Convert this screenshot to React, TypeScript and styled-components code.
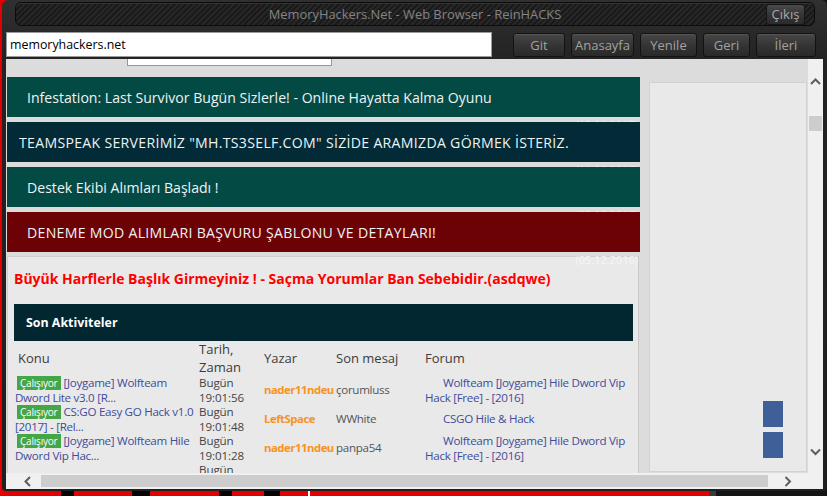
import React from 'react'
import styled, { createGlobalStyle } from 'styled-components'

const GlobalStyle = createGlobalStyle`
  html, body {
    margin: 0;
    padding: 0;
  }
  body {
    width: 827px;
    height: 496px;
    overflow: hidden;
    font-family: "Open Sans", "Liberation Sans", sans-serif;
    background: linear-gradient(90deg,
      #e30000 0 61px, #050505 61px 74px, #e30000 74px 132px, #050505 132px 150px,
      #e30000 150px 219px, #050505 219px 232px, #e30000 232px 264px, #050505 264px 280px,
      #e30000 280px 308px, #f4f4f4 308px 310px, #e30000 310px 709px,
      #3a3a3a 709px 716px, #141414 716px);
  }
`

type Row = {
    title: string[],
    day: string,
    time: string,
    author: string,
    last: string,
    forum: string[],
    badge: boolean,
}

const rows: Row[] = [
    { badge: true, title: ['[Joygame] Wolfteam', 'Dword Lite v3.0 [R...'], day: 'Bugün', time: '19:01:56', author: 'nader11ndeu', last: 'çorumluss', forum: ['Wolfteam [Joygame] Hile Dword Vip', 'Hack [Free] - [2016]'] },
    { badge: true, title: ['CS:GO Easy GO Hack v1.0', '[2017] - [Rel...'], day: 'Bugün', time: '19:01:48', author: 'LeftSpace', last: 'WWhite', forum: ['CSGO Hile & Hack'] },
    { badge: true, title: ['[Joygame] Wolfteam Hile', 'Dword Vip Hac...'], day: 'Bugün', time: '19:01:28', author: 'nader11ndeu', last: 'panpa54', forum: ['Wolfteam [Joygame] Hile Dword Vip', 'Hack [Free] - [2016]'] },
    { badge: false, title: [], day: 'Bugün', time: '19:01:11', author: '', last: '', forum: [] },
]

const banners = [
    { text: 'Infestation: Last Survivor Bugün Sizlerle! - Online Hayatta Kalma Oyunu', tone: 'teal', date: '(12.01.2017)', indent: 20, caps: false },
    { text: 'TEAMSPEAK SERVERİMİZ "MH.TS3SELF.COM" SİZİDE ARAMIZDA GÖRMEK İSTERİZ.', tone: 'navy', date: '(11.02.2016)', indent: 12, caps: true },
    { text: 'Destek Ekibi Alımları Başladı !', tone: 'teal', date: '(03.12.2016)', indent: 20, caps: false },
    { text: 'DENEME MOD ALIMLARI BAŞVURU ŞABLONU VE DETAYLARI!', tone: 'red', date: '(05.12.2016)', indent: 20, caps: true },
]

const toneColors: Record<string, string> = {
    teal: '#034a45',
    navy: '#022b37',
    red: '#6d0206',
}

const Window = styled.div`
    margin-left: 2px;
    width: 825px;
    height: 491px;
    box-sizing: border-box;
    padding: 2px 4px 2px 4px;
    background: linear-gradient(#303030, #232323 60px, #1f1f1f);
    border-radius: 6px 6px 4px 4px;
    display: flex;
    flex-direction: column;
`

const TitleBar = styled.div`
    height: 24px;
    margin: 0 8px 0 9px;
    box-sizing: border-box;
    border: 1px solid #0c0c0c;
    border-radius: 6px;
    background: repeating-linear-gradient(135deg, #1a1a1a 0 2px, #272727 2px 4px);
    box-shadow: inset 0 1px 0 #333;
    display: grid;
    grid-template-columns: 1fr auto 1fr;
    align-items: center;
`

const Title = styled.div`
    grid-column: 2;
    color: #858585;
    font-size: 12.9px;
    white-space: nowrap;
`

const ExitButton = styled.div`
    grid-column: 3;
    justify-self: end;
    margin-right: 9px;
    width: 39px;
    height: 21px;
    box-sizing: border-box;
    border: 1px solid #151515;
    border-radius: 3px;
    background: linear-gradient(#4a4a4a, #333 55%, #2b2b2b);
    color: #a8a8a8;
    font-size: 13px;
    display: flex;
    align-items: center;
    justify-content: center;
`

const AddressRow = styled.div`
    display: flex;
    align-items: flex-start;
    padding: 6px 7px 2px 0;
    gap: 6px;
`

const AddressInput = styled.div`
    width: 486px;
    height: 25px;
    box-sizing: border-box;
    background: #fff;
    border: 1px solid #9a9a9a;
    color: #000;
    font-size: 12.4px;
    line-height: 23px;
    padding-left: 3px;
    margin-right: 15px;
`

const NavButton = styled.div<{ $w: number }>`
    width: ${p => p.$w}px;
    height: 24px;
    margin-top: 1px;
    box-sizing: border-box;
    border: 1px solid #121212;
    border-radius: 3px;
    background: linear-gradient(#474747, #353535 50%, #292929);
    box-shadow: inset 0 1px 0 #555;
    color: #a2a2a2;
    font-size: 13px;
    display: flex;
    align-items: center;
    justify-content: center;
`

const Viewport = styled.div`
    flex: 1;
    display: grid;
    grid-template-columns: 802px 15px;
    grid-template-rows: 414px 16px;
`

const Page = styled.div`
    background: #dcdcdc;
    overflow: hidden;
`

const SearchStrip = styled.div`
    height: 7px;
`

const SearchBox = styled.div`
    margin-left: 121px;
    width: 205px;
    height: 7px;
    box-sizing: border-box;
    background: #fff;
    border: 1px solid #7f9db9;
    border-top: none;
`

const PageBody = styled.div`
    display: flex;
    margin-top: 11px;
    padding-left: 1px;
`

const Main = styled.div`
    width: 633px;
    display: flex;
    flex-direction: column;
    gap: 5px;
`

const BannerWrap = styled.div`
    position: relative;
`

const Banner = styled.div<{ $tone: string, $indent: number, $caps: boolean }>`
    position: relative;
    z-index: 1;
    height: 40px;
    background: ${p => toneColors[p.$tone]};
    color: #eef3f3;
    font-size: 14.1px;
    letter-spacing: ${p => p.$caps ? '0.3px' : '0'};
    display: flex;
    align-items: center;
    padding-left: ${p => p.$indent}px;
    white-space: nowrap;
`

const BannerDate = styled.div`
    position: absolute;
    z-index: 0;
    right: 2px;
    top: 100%;
    color: #f6f6f6;
    font-size: 11px;
    line-height: 15px;
`

const Panel = styled.div`
    margin-top: -1px;
    height: 240px;
    background: #e9e9e9;
    border: 1px solid #d0d0d0;
    border-right-color: #c8c8c8;
    margin-right: 1px;
    padding: 12px 5px 0 6px;
`

const Warning = styled.div`
    color: #f00;
    font-weight: 700;
    font-size: 14px;
    line-height: 20px;
    white-space: nowrap;
`

const SectionBar = styled.div`
    margin-top: 15px;
    height: 37px;
    background: #022731;
    color: #fff;
    font-weight: 700;
    font-size: 12.4px;
    display: flex;
    align-items: center;
    padding-left: 12px;
`

const Grid = styled.div`
    display: grid;
    grid-template-columns: 183px 65px 72px 89px 1fr;
    align-items: center;
    font-size: 11.6px;
    letter-spacing: -0.3px;
    line-height: 14.5px;
`

const HeadCell = styled.div<{ $pad?: number }>`
    height: 35px;
    display: flex;
    align-items: center;
    padding-left: ${p => p.$pad ?? 2}px;
    color: #3c3c3c;
    font-size: 13px;
    letter-spacing: 0;
    line-height: 17.5px;
`

const Cell = styled.div<{ $pad?: number }>`
    min-height: 29px;
    display: flex;
    flex-direction: column;
    justify-content: center;
    padding-left: ${p => p.$pad ?? 2}px;
    white-space: nowrap;
`

const TopicLine = styled.div`
    color: #3f4c9b;
`

const Badge = styled.span`
    display: inline-block;
    margin: 0 3px 0 2px;
    padding: 0 3px;
    height: 14px;
    line-height: 14px;
    background: #45a647;
    color: #fff;
    font-size: 10px;
    letter-spacing: -0.2px;
    vertical-align: top;
`

const DateText = styled.div`
    color: #444;
    letter-spacing: -0.1px;
    font-size: 11.6px;
`

const Author = styled.div`
    color: #f7931e;
    font-weight: 700;
    font-size: 11.3px;
    letter-spacing: -0.45px;
`

const LastPost = styled.div`
    color: #555;
`

const ForumLine = styled.div<{ $first: boolean }>`
    color: #3f4c9b;
    padding-left: ${p => p.$first ? 18 : 0}px;
`

const Sidebar = styled.div`
    margin: 5px 0 0 9px;
    width: 158px;
    height: 390px;
    box-sizing: border-box;
    background: #e9e9e9;
    border: 1px solid #d2d2d2;
    display: flex;
    flex-direction: column;
    align-items: flex-end;
    justify-content: flex-end;
    gap: 5px;
    padding: 0 23px 13px 0;
`

const ShareSquare = styled.div`
    width: 20px;
    height: 26px;
    background: #3f5f98;
`

const VScroll = styled.div`
    background: #f0f0f0;
    display: flex;
    flex-direction: column;
    align-items: center;
`

const ArrowBox = styled.div<{ $top?: number, $bottom?: number }>`
    height: 17px;
    display: flex;
    align-items: center;
    justify-content: center;
    margin-top: ${p => p.$top ?? 0}px;
    margin-bottom: ${p => p.$bottom ?? 0}px;
`

const VThumb = styled.div`
    margin-top: 26px;
    width: 13px;
    height: 15px;
    background: #cdcdcd;
`

const Spacer = styled.div`
    flex: 1;
`

const HScroll = styled.div`
    background: #f0f0f0;
    display: flex;
    align-items: center;
`

const HArrowBox = styled.div<{ $w: number, $pad: number }>`
    width: ${p => p.$w}px;
    height: 16px;
    box-sizing: border-box;
    padding-left: ${p => p.$pad}px;
    display: flex;
    align-items: center;
    justify-content: center;
`

const HThumb = styled.div`
    width: 727px;
    height: 12px;
    background: #cdcdcd;
`

const Corner = styled.div`
    background: #f0f0f0;
`

type ChevronProps = { dir: 'up' | 'down' | 'left' | 'right' }

const Chevron: React.FC<ChevronProps> = ({ dir }) => {
    const points = {
        up: '1,6 5.5,1.5 10,6',
        down: '1,1.5 5.5,6 10,1.5',
        left: '6,1 1.5,5.5 6,10',
        right: '1.5,1 6,5.5 1.5,10',
    }[dir]
    const vertical = dir === 'up' || dir === 'down'
    return (
        <svg width={vertical ? 11 : 8} height={vertical ? 8 : 11} viewBox={vertical ? '0 0 11 8' : '0 0 8 11'}>
            <polyline points={points} fill="none" stroke="#5d5d5d" strokeWidth="2" />
        </svg>
    )
}

const buttons = [
    { label: 'Git', w: 52 },
    { label: 'Anasayfa', w: 63 },
    { label: 'Yenile', w: 57 },
    { label: 'Geri', w: 47 },
    { label: 'İleri', w: 60 },
]

export default function App() {
    return (
        <>
            <GlobalStyle />
            <Window>
                <TitleBar>
                    <Title>MemoryHackers.Net - Web Browser - ReinHACKS</Title>
                    <ExitButton>Çıkış</ExitButton>
                </TitleBar>
                <AddressRow>
                    <AddressInput>memoryhackers.net</AddressInput>
                    {buttons.map(b => (
                        <NavButton key={b.label} $w={b.w}>{b.label}</NavButton>
                    ))}
                </AddressRow>
                <Viewport>
                    <Page>
                        <SearchStrip>
                            <SearchBox />
                        </SearchStrip>
                        <PageBody>
                            <Main>
                                {banners.map(b => (
                                    <BannerWrap key={b.date}>
                                        <Banner $tone={b.tone} $indent={b.indent} $caps={b.caps}>{b.text}</Banner>
                                        <BannerDate>{b.date}</BannerDate>
                                    </BannerWrap>
                                ))}
                                <Panel>
                                    <Warning>Büyük Harflerle Başlık Girmeyiniz ! - Saçma Yorumlar Ban Sebebidir.(asdqwe)</Warning>
                                    <SectionBar>Son Aktiviteler</SectionBar>
                                    <Grid>
                                        <HeadCell $pad={4}>Konu</HeadCell>
                                        <HeadCell>Tarih,<br />Zaman</HeadCell>
                                        <HeadCell>Yazar</HeadCell>
                                        <HeadCell>Son mesaj</HeadCell>
                                        <HeadCell>Forum</HeadCell>
                                        {rows.map((r, i) => (
                                            <React.Fragment key={i}>
                                                <Cell $pad={1}>
                                                    {r.title.map((t, j) => (
                                                        <TopicLine key={j}>
                                                            {j === 0 && r.badge && <Badge>Çalışıyor</Badge>}
                                                            {t}
                                                        </TopicLine>
                                                    ))}
                                                </Cell>
                                                <Cell>
                                                    <DateText>{r.day}</DateText>
                                                    <DateText>{r.time}</DateText>
                                                </Cell>
                                                <Cell><Author>{r.author}</Author></Cell>
                                                <Cell><LastPost>{r.last}</LastPost></Cell>
                                                <Cell>
                                                    {r.forum.map((f, j) => (
                                                        <ForumLine key={j} $first={j === 0}>{f}</ForumLine>
                                                    ))}
                                                </Cell>
                                            </React.Fragment>
                                        ))}
                                    </Grid>
                                </Panel>
                            </Main>
                            <Sidebar>
                                <ShareSquare />
                                <ShareSquare />
                            </Sidebar>
                        </PageBody>
                    </Page>
                    <VScroll>
                        <ArrowBox $top={14}><Chevron dir="up" /></ArrowBox>
                        <VThumb />
                        <Spacer />
                        <ArrowBox $bottom={13}><Chevron dir="down" /></ArrowBox>
                    </VScroll>
                    <HScroll>
                        <HArrowBox $w={35} $pad={9}><Chevron dir="left" /></HArrowBox>
                        <HThumb />
                        <HArrowBox $w={40} $pad={0}><Chevron dir="right" /></HArrowBox>
                    </HScroll>
                    <Corner />
                </Viewport>
            </Window>
        </>
    )
}
